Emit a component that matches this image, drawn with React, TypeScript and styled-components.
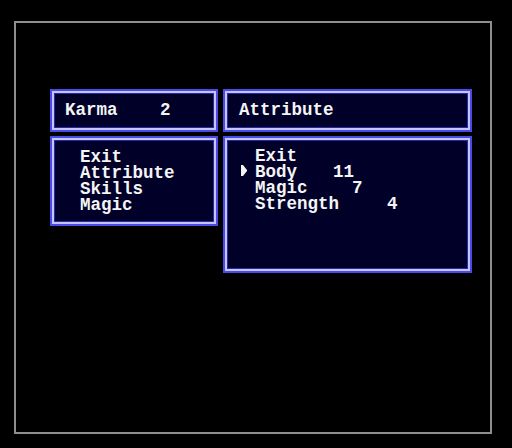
import styled, { createGlobalStyle } from "styled-components";

interface PanelProps {
  $height: number;
  $padding: string;
};
interface LabelProps {
  $width: number;
};

const GlobalStyle = createGlobalStyle`
  html, body {
    margin: 0;
    padding: 0;
    background-color: #000;
  }
  body {
    width: 512px;
    height: 448px;
    overflow: hidden;
  }
`;

const Screen = styled.div`
  width: 512px;
  height: 448px;
  padding: 21px 20px 14px 14px;
  box-sizing: border-box;
  background-color: #000;
`;
const Frame = styled.div`
  width: 478px;
  height: 413px;
  box-sizing: border-box;
  border: 2px solid #8e8e8e;
  padding: 66px 0 0 34px;
`;
const MenuGrid = styled.div`
  display: grid;
  grid-template-columns: 168px 249px;
  column-gap: 5px;
  row-gap: 4px;
  align-items: start;
`;
const Panel = styled.div`
  height: ${(props: PanelProps) => props.$height}px;
  padding: ${(props: PanelProps) => props.$padding};
  box-sizing: border-box;
  background-color: #000028;
  border: 2px solid #4a4ae6;
  box-shadow: inset 0 0 0 2px #c4c4ff, inset 0 0 0 3px #2a2aa8;
  font-family: "Liberation Mono", "DejaVu Sans Mono", monospace;
  font-size: 17.5px;
  font-weight: bold;
  line-height: 16px;
  color: #f4f4f4;
  white-space: pre;
`;
const Row = styled.div`
  display: flex;
  height: 16px;
`;
const CursorCell = styled.span`
  width: 14px;
  flex-shrink: 0;
  display: flex;
  align-items: flex-start;
  padding-top: 1px;
`;
const Label = styled.span`
  width: ${(props: LabelProps) => props.$width}px;
  flex-shrink: 0;
`;

const Cursor = () => (
  <svg width="7" height="11" viewBox="0 0 7 11">
    <polygon points="0,0 2,0 6,5 6,6 2,11 0,11" fill="#f4f4f4" />
  </svg>
);

const stats = [
  { label: "Body", value: "11", width: 78 },
  { label: "Magic", value: "7", width: 97 },
  { label: "Strength", value: "4", width: 132 },
];

export default function App() {
  return (
    <>
      <GlobalStyle />
      <Screen>
        <Frame>
          <MenuGrid>
            <Panel $height={43} $padding="11px 13px">
              <Row>
                <Label $width={95}>Karma</Label>
                <span>2</span>
              </Row>
            </Panel>
            <Panel $height={43} $padding="11px 14px">
              <Row>Attribute</Row>
            </Panel>
            <Panel $height={90} $padding="11px 28px">
              <Row>Exit</Row>
              <Row>Attribute</Row>
              <Row>Skills</Row>
              <Row>Magic</Row>
            </Panel>
            <Panel $height={137} $padding="10px 16px">
              <Row>
                <CursorCell />
                <span>Exit</span>
              </Row>
              {stats.map((stat, i) => (
                <Row key={stat.label}>
                  <CursorCell>{i === 0 && <Cursor />}</CursorCell>
                  <Label $width={stat.width}>{stat.label}</Label>
                  <span>{stat.value}</span>
                </Row>
              ))}
            </Panel>
          </MenuGrid>
        </Frame>
      </Screen>
    </>
  );
}
